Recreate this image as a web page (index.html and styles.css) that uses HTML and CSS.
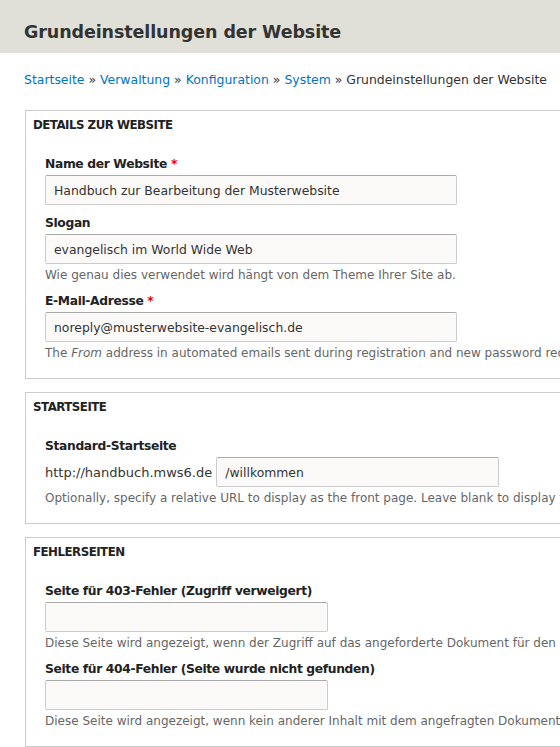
FILE: index.html
```html
<!DOCTYPE html>
<html lang="de">
<head>
    <meta charset="UTF-8">
    <meta name="viewport" content="width=device-width, initial-scale=1.0">
    <title>Grundeinstellungen der Website</title>
    <link rel="stylesheet" href="styles.css">
</head>
<body>

<div class="pageHeader">
    <h1 class="pageTitle">Grundeinstellungen der Website</h1>
</div>

<div class="page">
    <p class="breadcrumb">
        <a href="#">Startseite</a> » <a href="#">Verwaltung</a> » <a href="#">Konfiguration</a> » <a href="#">System</a> » Grundeinstellungen der Website
    </p>

    <form action="#" class="settingsForm">
        <fieldset class="group">
            <legend class="groupTitle">Details zur Website</legend>
            <div class="formItem">
                <label for="siteName">Name der Website <span class="required">*</span></label>
                <input type="text" id="siteName" class="textField" value="Handbuch zur Bearbeitung der Musterwebsite">
            </div>
            <div class="formItem">
                <label for="siteSlogan">Slogan</label>
                <input type="text" id="siteSlogan" class="textField" value="evangelisch im World Wide Web">
                <div class="description">Wie genau dies verwendet wird hängt von dem Theme Ihrer Site ab.</div>
            </div>
            <div class="formItem">
                <label for="siteMail">E-Mail-Adresse <span class="required">*</span></label>
                <input type="text" id="siteMail" class="textField" value="noreply@musterwebsite-evangelisch.de">
                <div class="description">The <em>From</em> address in automated emails sent during registration and new password requests, and other notifications.</div>
            </div>
        </fieldset>

        <fieldset class="group">
            <legend class="groupTitle">Startseite</legend>
            <div class="formItem">
                <label for="frontPage">Standard-Startseite</label>
                <div class="prefixRow">
                    <span class="prefix">http://handbuch.mws6.de</span>
                    <input type="text" id="frontPage" class="textField mediumField" value="/willkommen">
                </div>
                <div class="description">Optionally, specify a relative URL to display as the front page. Leave blank to display the default content feed.</div>
            </div>
        </fieldset>

        <fieldset class="group">
            <legend class="groupTitle">Fehlerseiten</legend>
            <div class="formItem">
                <label for="page403">Seite für 403-Fehler (Zugriff verweigert)</label>
                <input type="text" id="page403" class="textField mediumField">
                <div class="description">Diese Seite wird angezeigt, wenn der Zugriff auf das angeforderte Dokument für den Benutzer verweigert wird.</div>
            </div>
            <div class="formItem">
                <label for="page404">Seite für 404-Fehler (Seite wurde nicht gefunden)</label>
                <input type="text" id="page404" class="textField mediumField">
                <div class="description">Diese Seite wird angezeigt, wenn kein anderer Inhalt mit dem angefragten Dokument übereinstimmt.</div>
            </div>
        </fieldset>
    </form>
</div>

</body>
</html>
```

FILE: styles.css
```css
body {
    font-family: 'DejaVu Sans', Verdana, sans-serif;
    font-size: 13px;
    margin: 0;
    padding: 0;
    background-color: #fff;
    color: #333;
    overflow: hidden;
}
.pageHeader {
    background-color: #e0e0d8;
    height: 53px;
    padding: 0 24px;
}
.pageTitle {
    margin: 0;
    padding-top: 22px;
    font-size: 17.5px;
    line-height: 20px;
    letter-spacing: -0.1px;
    font-weight: bold;
    color: #333;
    white-space: nowrap;
}
.page {
    padding: 0 0 0 25px;
}
.breadcrumb {
    margin: 18px 0 0 -1px;
    font-size: 12.45px;
    line-height: 18px;
    white-space: nowrap;
}
.breadcrumb a {
    color: #0074bd;
    text-decoration: none;
}
.settingsForm {
    width: 640px;
    margin-top: 21px;
}
/* fieldsets run past the right edge, as in the admin screen */
.group {
    border: 1px solid #ccc;
    margin: 0 0 13px 0;
    padding: 45px 19px 16px 19px;
    position: relative;
    min-width: 0;
}
.groupTitle {
    position: absolute;
    top: 6px;
    left: 7px;
    padding: 0;
    font-size: 11.8px;
    line-height: 16px;
    letter-spacing: -0.5px;
    font-weight: bold;
    text-transform: uppercase;
    color: #222;
}
.formItem {
    margin-top: 10px;
}
.formItem:first-of-type {
    margin-top: 0;
}
label {
    display: block;
    font-size: 12.3px;
    letter-spacing: -0.35px;
    font-weight: bold;
    line-height: 16px;
    margin-bottom: 3px;
    color: #222;
}
.required {
    color: #e00;
}
.prefixRow {
    display: flex;
    align-items: center;
}
.textField {
    box-sizing: border-box;
    width: 412px;
    height: 30px;
    padding: 0 8px;
    font-family: inherit;
    font-size: 12.4px;
    color: #333;
    background-color: #fbfaf8;
    border: 1px solid #ccc;
    border-top-color: #aaa;
    border-radius: 2px;
    margin: 0;
}
.mediumField {
    width: 283px;
}
.prefixRow .mediumField {
    margin-left: 4px;
}
.description {
    font-size: 12px;
    color: #666;
    line-height: 16px;
    margin: 3px 0 1px 0;
    white-space: nowrap;
}
```
